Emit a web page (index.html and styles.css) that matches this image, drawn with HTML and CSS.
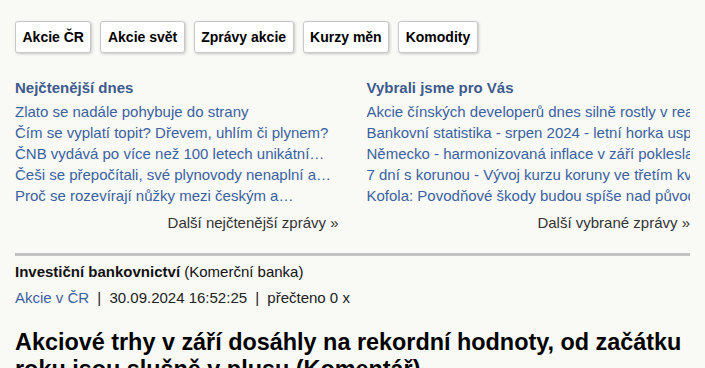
FILE: index.html
```html
<!DOCTYPE html>
<html lang="cs">
<head>
  <meta charset="UTF-8">
  <title>Akcie - zprávy</title>
  <link rel="stylesheet" href="styles.css">
</head>
<body>

  <div class="page">
    <nav class="tabs">
      <a href="#" class="tab">Akcie ČR</a>
      <a href="#" class="tab">Akcie svět</a>
      <a href="#" class="tab">Zprávy akcie</a>
      <a href="#" class="tab">Kurzy měn</a>
      <a href="#" class="tab">Komodity</a>
    </nav>

    <div class="boxes">
      <div class="box">
        <h3>Nejčtenější dnes</h3>
        <ul>
          <li><a href="#">Zlato se nadále pohybuje do strany</a></li>
          <li><a href="#">Čím se vyplatí topit? Dřevem, uhlím či plynem?</a></li>
          <li><a href="#">ČNB vydává po více než 100 letech unikátní…</a></li>
          <li><a href="#">Češi se přepočítali, své plynovody nenaplní a…</a></li>
          <li><a href="#">Proč se rozevírají nůžky mezi českým a…</a></li>
        </ul>
        <a href="#" class="more">Další nejčtenější zprávy »</a>
      </div>
      <div class="box">
        <h3>Vybrali jsme pro Vás</h3>
        <ul>
          <li><a href="#">Akcie čínských developerů dnes silně rostly v reakci na nová opatření</a></li>
          <li><a href="#">Bankovní statistika - srpen 2024 - letní horka uspávají úvěry</a></li>
          <li><a href="#">Německo - harmonizovaná inflace v září poklesla pod 2 %</a></li>
          <li><a href="#">7 dní s korunou - Vývoj kurzu koruny ve třetím kvartálu</a></li>
          <li><a href="#">Kofola: Povodňové škody budou spíše nad původním odhadem</a></li>
        </ul>
        <a href="#" class="more">Další vybrané zprávy »</a>
      </div>
    </div>

    <div class="article">
      <div class="source"><strong>Investiční bankovnictví</strong> (Komerční banka)</div>
      <div class="meta">
        <a href="#">Akcie v ČR</a>
        <span class="sep">|</span>
        <span>30.09.2024 16:52:25</span>
        <span class="sep">|</span>
        <span>přečteno 0 x</span>
      </div>
      <h1>Akciové trhy v září dosáhly na rekordní hodnoty, od začátku roku jsou slušně v plusu (Komentář)</h1>
    </div>
  </div>

</body>
</html>
```

FILE: styles.css
```css
body {
  margin: 0;
  background: #f9f9f6;
  font-family: "Liberation Sans", Arial, sans-serif;
  font-size: 15px;
  color: #222;
}

a {
  text-decoration: none;
}

.page {
  padding: 21px 15px 0 15px;
}

.tabs {
  display: flex;
  gap: 9px;
}

.tab {
  display: block;
  height: 30px;
  line-height: 30px;
  padding: 0 6.5px;
  background: #fff;
  border: 1px solid #c8c8c8;
  border-radius: 3px;
  box-shadow: 1px 1px 3px rgba(0,0,0,0.2);
  color: #000;
  font-size: 14px;
  font-weight: bold;
}

.boxes {
  display: flex;
  gap: 28px;
  margin-top: 26px;
  padding-bottom: 21px;
  border-bottom: 3px solid #c2c2c2;
}

.box {
  flex: 1;
  min-width: 0;
  display: flex;
  flex-direction: column;
}

.box h3 {
  margin: 0 0 4px 0;
  font-size: 15px;
  line-height: 18px;
  color: #3d5b8c;
}

.box ul {
  list-style: none;
  margin: 0;
  padding: 0;
}

.box li {
  line-height: 21px;
  white-space: nowrap;
  overflow: hidden;
}

.box li a {
  color: #3b62a0;
}

.more {
  align-self: flex-end;
  margin-top: 8px;
  line-height: 18px;
  color: #333;
}

.article {
  padding-top: 6px;
}

.source {
  line-height: 20px;
  color: #111;
}

.meta {
  margin-top: 6px;
  line-height: 20px;
  color: #222;
}

.meta a {
  color: #3b62a0;
}

.sep {
  margin: 0 4px;
}

.article h1 {
  margin: 21px 0 0 0;
  font-size: 23.4px;
  line-height: 27px;
  color: #000;
}
```
